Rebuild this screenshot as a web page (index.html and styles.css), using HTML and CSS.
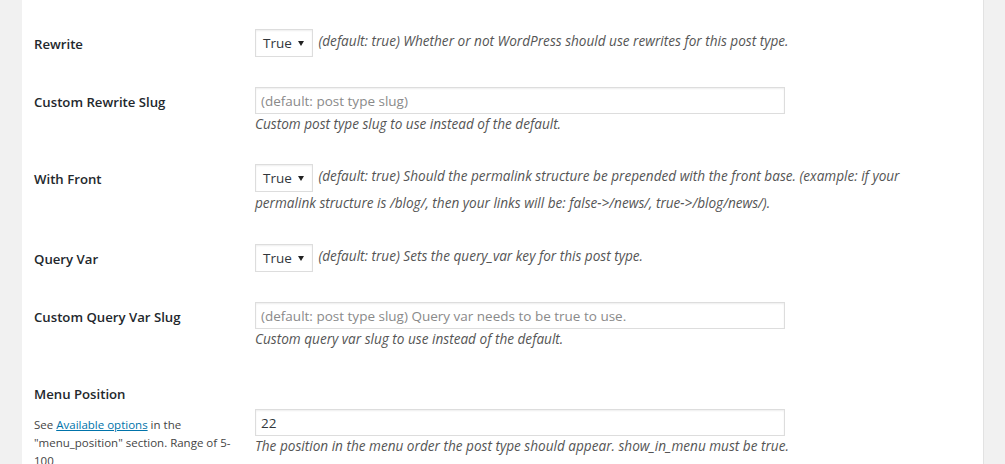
FILE: index.html
```html
<!doctype html>
<html>
    <head>
        <meta charset="utf-8">
        <title>Edit Post Type</title>
        <link rel="stylesheet" href="styles.css">
    </head>

    <body>
        <div class="wrap">
            <div class="postbox">
                <div class="formtable">
                    <div class="fieldrow">
                        <div class="labelcell"><label>Rewrite</label></div>
                        <div class="fieldcell">
                            <span class="fakeselect">True<span class="arrow"></span></span>
                            <span class="description">(default: true) Whether or not WordPress should use rewrites for this post type.</span>
                        </div>
                    </div>
                    <div class="fieldrow">
                        <div class="labelcell"><label>Custom Rewrite Slug</label></div>
                        <div class="fieldcell">
                            <input class="textfield" type="text" placeholder="(default: post type slug)">
                            <div class="description block">Custom post type slug to use instead of the default.</div>
                        </div>
                    </div>
                    <div class="fieldrow">
                        <div class="labelcell"><label>With Front</label></div>
                        <div class="fieldcell">
                            <span class="fakeselect">True<span class="arrow"></span></span>
                            <span class="description">(default: true) Should the permalink structure be prepended with the front base. (example: if your permalink structure is /blog/, then your links will be: false-&gt;/news/, true-&gt;/blog/news/).</span>
                        </div>
                    </div>
                    <div class="fieldrow">
                        <div class="labelcell"><label>Query Var</label></div>
                        <div class="fieldcell">
                            <span class="fakeselect">True<span class="arrow"></span></span>
                            <span class="description">(default: true) Sets the query_var key for this post type.</span>
                        </div>
                    </div>
                    <div class="fieldrow">
                        <div class="labelcell"><label>Custom Query Var Slug</label></div>
                        <div class="fieldcell">
                            <input class="textfield" type="text" placeholder="(default: post type slug) Query var needs to be true to use.">
                            <div class="description block">Custom query var slug to use instead of the default.</div>
                        </div>
                    </div>
                    <div class="fieldrow">
                        <div class="labelcell">
                            <label>Menu Position</label>
                            <p class="labelnote">See <a href="#">Available options</a> in the "menu_position" section. Range of 5-100</p>
                        </div>
                        <div class="fieldcell lowfield">
                            <input class="textfield" type="text" value="22">
                            <div class="description block">The position in the menu order the post type should appear. show_in_menu must be true.</div>
                        </div>
                    </div>
                </div>
            </div>
        </div>
    </body>

</html>
```

FILE: styles.css
```css
body{
    margin: 0;
    background-color: #f1f1f1;
    font-family: "Open Sans", "Noto Sans", sans-serif;
    color: #23282d;
    font-size: 13px;
}

.wrap{
    padding-left: 22px;
    padding-right: 21px;
}

.postbox{
    background-color: #fff;
    border-right: 1px solid #e2e2e2;
    padding: 14px 12px 20px 12px;
    min-height: 480px;
}

.formtable{
    display: grid;
    grid-template-columns: 221px 1fr;
}

.fieldrow{
    display: contents;
}

.labelcell{
    padding-top: 21px;
}

.labelcell label{
    display: block;
    font-size: 13.2px;
    font-weight: 600;
    line-height: 18px;
    color: #23282d;
}

.labelnote{
    margin: 13px 0 0 0;
    width: 202px;
    font-size: 11.5px;
    line-height: 18px;
    color: #444;
}

.labelnote a{
    color: #0073aa;
}

.fieldcell{
    padding: 15px 28px 15px 0;
    line-height: 22px;
}

.lowfield{
    padding-top: 45px;
}

.fakeselect{
    display: inline-block;
    position: relative;
    box-sizing: border-box;
    width: 58px;
    height: 28px;
    padding-left: 7px;
    border: 1px solid #ddd;
    box-shadow: inset 0 1px 2px rgba(0, 0, 0, 0.07);
    font-size: 13.5px;
    line-height: 26px;
    color: #32373c;
    vertical-align: middle;
    margin-right: 2px;
}

.arrow{
    position: absolute;
    right: 8px;
    top: 11px;
    border-left: 3px solid transparent;
    border-right: 3px solid transparent;
    border-top: 5px solid #222;
}

.description{
    font-style: italic;
    font-size: 13.6px;
    color: #555;
}

.block{
    display: block;
    line-height: 20px;
}

.textfield{
    display: block;
    box-sizing: border-box;
    width: 530px;
    height: 27px;
    margin: 0;
    padding: 0 5px;
    border: 1px solid #ddd;
    box-shadow: inset 0 1px 2px rgba(0, 0, 0, 0.07);
    font-family: "Open Sans", "Noto Sans", sans-serif;
    font-size: 13.5px;
    color: #32373c;
    outline: none;
}

.textfield::placeholder{
    color: #8a8a8a;
}
```
